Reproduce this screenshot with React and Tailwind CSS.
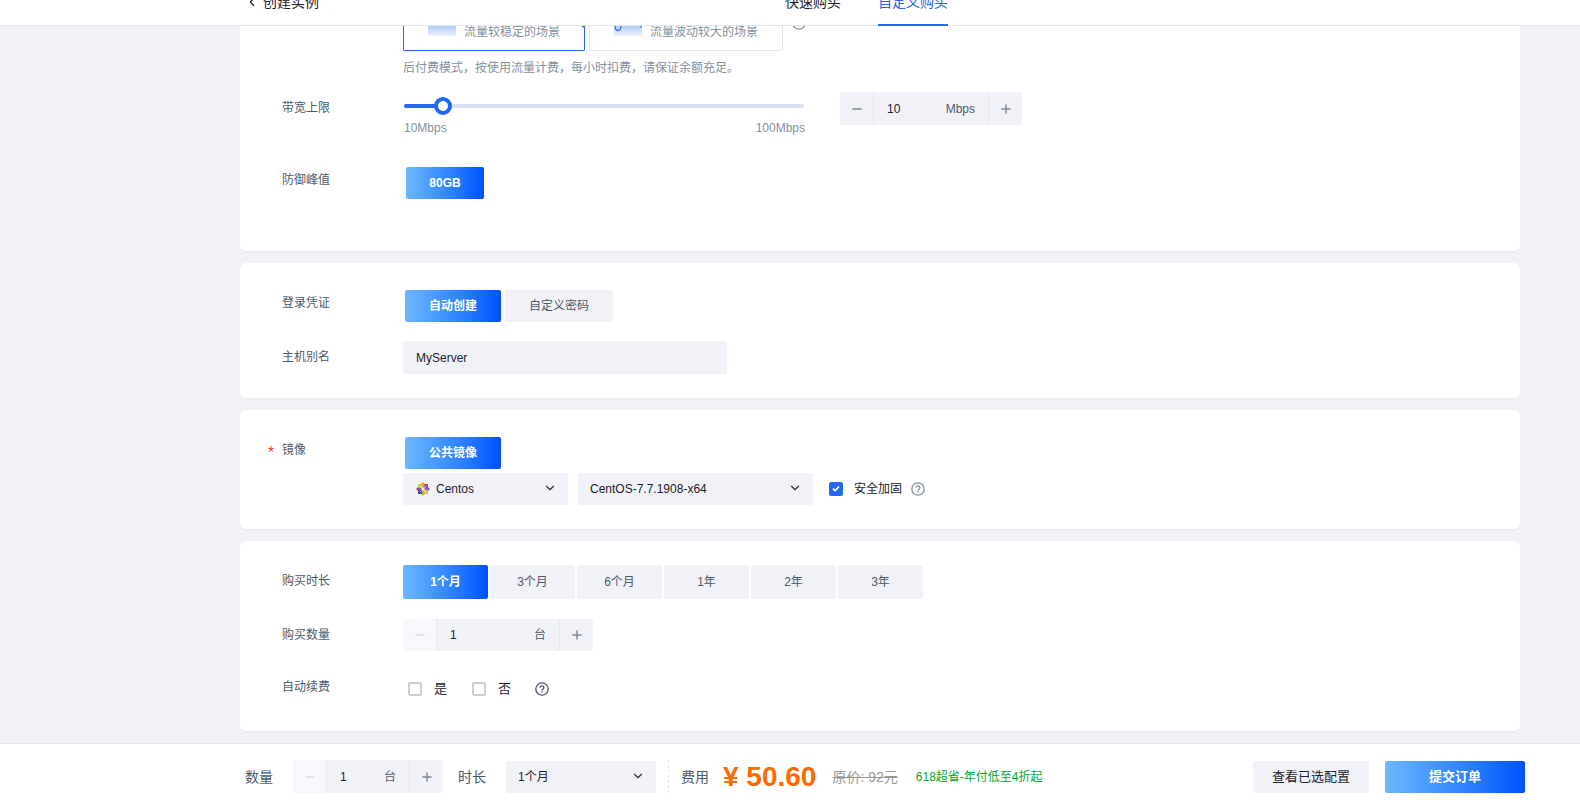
import { useState } from "react";
import { Check, ChevronDown, ChevronLeft, Minus, Plus } from "lucide-react";
import clsx from "clsx";

const durations = ["1个月", "3个月", "6个月", "1年", "2年", "3年"];

function HelpIcon({ className }) {
  return (
    <svg viewBox="0 0 14 14" className={clsx("h-3.5 w-3.5 shrink-0", className)} fill="none" stroke="currentColor" strokeWidth="1.3">
      <circle cx="7" cy="7" r="6.2" />
      <path d="M5.2 5.7a1.8 1.8 0 1 1 2.7 1.5c-.6.4-.9.6-.9 1.2" />
      <path d="M7 9.3v1.3" />
    </svg>
  );
}

function CentosLogo({ className }) {
  return (
    <svg viewBox="0 0 28 28" className={className}>
      <path d="M14 0l4 4-4 9-4-9z" fill="#efa724" />
      <path d="M28 14l-4 4-9-4 9-4z" fill="#6a69ae" />
      <path d="M14 28l-4-4 4-9 4 9z" fill="#9ccd2a" />
      <path d="M0 14l4-4 9 4-9 4z" fill="#a14a92" />
      <path d="M4 4h7l2 9-9-2z" fill="#a9d44a" />
      <path d="M24 4h-7l-2 9 9-2z" fill="#a03c8c" />
      <path d="M24 24h-7l-2-9 9 2z" fill="#f2b04a" />
      <path d="M4 24h7l2-9-9 2z" fill="#3b3a90" />
      <path d="M7 7l14 14M21 7L7 21" stroke="#f1f2f8" strokeWidth="1.6" />
    </svg>
  );
}

function Card({ className, children }) {
  return <section className={clsx("rounded-md bg-white pl-[42px] pr-6 shadow-[0_1px_2px_rgba(30,40,80,0.06)]", className)}>{children}</section>;
}

function Row({ label, labelClass, required, className, children }) {
  return (
    <div className={clsx("flex items-start", className)}>
      <div className={clsx("relative w-[121px] shrink-0 leading-5 text-[#4e5969]", labelClass)}>
        {required && <span className="absolute -left-3.5 top-1.5 text-base leading-5 text-[#f53f3f]">*</span>}
        {label}
      </div>
      {children}
    </div>
  );
}

function PrimaryButton({ className, children }) {
  return (
    <button className={clsx("h-8 rounded-xs bg-linear-to-r from-[#6bb8ff] to-[#0050ff] font-bold text-white", className)}>
      {children}
    </button>
  );
}

function Stepper({ label, value, onChange, min, unit, className }) {
  const atMin = value <= min;
  return (
    <div className={clsx("flex rounded-xs bg-[#f1f2f8] text-[#4e5969]", className)}>
      <button
        aria-label="-"
        disabled={atMin}
        onClick={() => onChange(value - 1)}
        className={clsx("flex w-[34px] shrink-0 items-center justify-center border-r border-[#e5e6eb]", atMin ? "bg-[#f7f8fc] text-[#d9dce3]" : "text-[#7d8696]")}
      >
        <Minus size={14} strokeWidth={2.5} />
      </button>
      <label className="flex min-w-0 flex-1 items-center px-[13px]">
        <input
          aria-label={label}
          value={value}
          onChange={(event) => onChange(Number(event.target.value) || min)}
          className="w-full min-w-0 bg-transparent text-[#1d2129] outline-none"
        />
        <span className="shrink-0">{unit}</span>
      </label>
      <button aria-label="+" onClick={() => onChange(value + 1)} className="flex w-[34px] shrink-0 items-center justify-center border-l border-[#e5e6eb] text-[#7d8696]">
        <Plus size={14} strokeWidth={2.5} />
      </button>
    </div>
  );
}

function Select({ label, options, icon, className }) {
  return (
    <div className={clsx("relative h-8", className)}>
      {icon}
      <select aria-label={label} className={clsx("h-full w-full appearance-none rounded-xs bg-[#f1f2f8] pr-8 text-[#1d2129] outline-none", icon ? "pl-[33px]" : "pl-3")}>
        {options.map((option) => (
          <option key={option}>{option}</option>
        ))}
      </select>
      <ChevronDown size={14} strokeWidth={2} className="pointer-events-none absolute right-[11px] top-2 text-[#272e3b]" />
    </div>
  );
}

function CheckBox({ label, checked, onChange, className }) {
  return (
    <label className={clsx("relative flex items-center text-[#1d2129]", className)}>
      <input
        type="checkbox"
        checked={checked}
        onChange={(event) => onChange(event.target.checked)}
        className="h-3.5 w-3.5 shrink-0 appearance-none rounded-xs border-2 border-[#c9cdd4] bg-white checked:border-[#2468f2] checked:bg-[#2468f2]"
      />
      {checked && <Check size={8} strokeWidth={5} className="pointer-events-none absolute left-[3px] text-white" />}
      {label}
    </label>
  );
}

export default function App() {
  const [bandwidth, setBandwidth] = useState(10);
  const [count, setCount] = useState(1);
  const [duration, setDuration] = useState("1个月");
  const [hardened, setHardened] = useState(true);
  const [renew, setRenew] = useState(null);

  return (
    <div className="flex min-h-screen flex-col bg-[#f0f2f7] font-['Liberation_Sans','Noto_Sans_CJK_SC',sans-serif] text-xs">
      <header className="sticky top-0 z-10 grid h-[26px] grid-cols-2 content-end items-end overflow-hidden bg-white text-sm leading-5 text-[#1d2129] shadow-[inset_0_-1px_0_#e5e6eb]">
        <a href="#" className="flex items-center gap-1 pb-3.5 pl-[245px]">
          <ChevronLeft size={14} />
          创建实例
        </a>
        <nav className="-ml-[5px] flex gap-[37px]">
          <a href="#" className="pb-3.5">快速购买</a>
          <a href="#" className="border-b-2 border-[#2468f2] pb-3 text-[#2468f2]">自定义购买</a>
        </nav>
      </header>

      <main className="flex flex-1 flex-col gap-3 pb-3 pl-60 pr-[60px]">
        <Card className="rounded-t-none pb-[52px]">
          <Row>
            <div>
              <div className="flex h-[25px] gap-1 overflow-hidden text-[#86909c]">
                <button className="relative flex w-[182px] items-start rounded-b-xs border border-t-0 border-[#2468f2] pl-6">
                  <span className="mr-2 h-2.5 w-7 bg-linear-to-b from-[#b3cbfb] to-[#eef3fe]" />
                  <span className="-mt-1 leading-5">流量较稳定的场景</span>
                  <svg viewBox="0 0 3 2" className="absolute right-0 top-0 h-0.5 w-[3px]">
                    <path d="M0 0h3v2z" fill="#2468f2" />
                  </svg>
                </button>
                <button className="relative flex w-[194px] items-start rounded-b-xs border border-t-0 border-[#e5e6eb] pl-6">
                  <svg viewBox="0 0 28 10" className="mr-2 h-2.5 w-7" fill="none">
                    <defs>
                      <linearGradient id="wave" x1="0" y1="0" x2="0" y2="1">
                        <stop offset="0" stopColor="#b3cbfb" />
                        <stop offset="1" stopColor="#eef3fe" />
                      </linearGradient>
                    </defs>
                    <path d="M0 0h28v10H0z" fill="url(#wave)" />
                    <path d="M1 0c0 3 1.5 4.4 3 4.4S7 3 7 0M27 0v1.5" stroke="#2468f2" strokeWidth="1.2" />
                  </svg>
                  <span className="-mt-1 leading-5">流量波动较大的场景</span>
                </button>
                <HelpIcon className="-mt-2.5 ml-[5px]" />
              </div>
              <p className="mt-[7px] leading-5 text-[#86909c]">后付费模式，按使用流量计费，每小时扣费，请保证余额充足。</p>
            </div>
          </Row>

          <Row label="带宽上限" labelClass="pt-1.5" className="mt-3.5">
            <div className="mt-[5px] w-[402px] text-[#86909c]">
              <div className="relative mx-px flex h-[18px] items-center">
                <div className="h-1 w-full rounded-full bg-[#dde1f1]">
                  <div className="h-full rounded-full bg-[#2468f2]" style={{ width: `${bandwidth}%` }} />
                </div>
                <input
                  type="range"
                  aria-label="带宽上限"
                  min="0"
                  max="100"
                  value={bandwidth}
                  onChange={(event) => setBandwidth(Math.max(10, Number(event.target.value)))}
                  className="absolute inset-y-0 -left-2.5 w-[418px] appearance-none bg-transparent [&::-webkit-slider-thumb]:h-[18px] [&::-webkit-slider-thumb]:w-[18px] [&::-webkit-slider-thumb]:appearance-none [&::-webkit-slider-thumb]:rounded-full [&::-webkit-slider-thumb]:border-4 [&::-webkit-slider-thumb]:border-[#2468f2] [&::-webkit-slider-thumb]:bg-white"
                />
              </div>
              <div className="mt-[3px] flex justify-between pl-px leading-5">
                <span>10Mbps</span>
                <span>100Mbps</span>
              </div>
            </div>
            <Stepper label="带宽上限" value={bandwidth} onChange={setBandwidth} min={1} unit="Mbps" className="ml-[35px] h-[33px] w-[182px]" />
          </Row>

          <Row label="防御峰值" labelClass="pt-[3px]" className="mt-[29px]">
            <PrimaryButton className="ml-[3px] w-[78px]">80GB</PrimaryButton>
          </Row>
        </Card>

        <Card className="pb-6 pt-[27px]">
          <Row label="登录凭证" labelClass="pt-[3px]">
            <div className="flex gap-1 pl-0.5">
              <PrimaryButton className="w-24">自动创建</PrimaryButton>
              <button className="h-8 w-[108px] rounded-xs bg-[#f1f2f8] text-[#4e5969]">自定义密码</button>
            </div>
          </Row>
          <Row label={<label htmlFor="alias">主机别名</label>} labelClass="pt-1.5" className="mt-[19px]">
            <input id="alias" defaultValue="MyServer" className="h-[33px] w-[324px] rounded-xs bg-[#f1f2f8] px-[13px] text-[#1d2129] outline-none" />
          </Row>
        </Card>

        <Card className="pb-6 pt-[27px]">
          <Row label="镜像" labelClass="pt-[3px]" required>
            <div>
              <PrimaryButton className="ml-0.5 w-24">公共镜像</PrimaryButton>
              <div className="mt-1 flex items-center">
                <Select
                  label="镜像"
                  options={["Centos"]}
                  icon={<CentosLogo className="pointer-events-none absolute left-[13px] top-[9px] h-3.5 w-3.5" />}
                  className="w-[165px]"
                />
                <Select label="CentOS" options={["CentOS-7.7.1908-x64"]} className="ml-2.5 w-[235px]" />
                <CheckBox label={<span className="ml-[11px]">安全加固</span>} checked={hardened} onChange={setHardened} className="ml-4" />
                <HelpIcon className="ml-[9px] text-[#86909c]" />
              </div>
            </div>
          </Row>
        </Card>

        <Card className="pb-7 pt-6">
          <Row label="购买时长" labelClass="pt-1.5">
            <div className="flex gap-0.5">
              {durations.map((item) => (
                <button
                  key={item}
                  onClick={() => setDuration(item)}
                  className={clsx(
                    "h-[34px] w-[85px] rounded-xs",
                    item === duration ? "bg-linear-to-r from-[#6bb8ff] to-[#0050ff] font-bold text-white" : "bg-[#f1f2f8] text-[#4e5969]"
                  )}
                >
                  {item}
                </button>
              ))}
            </div>
          </Row>
          <Row label="购买数量" labelClass="pt-1.5" className="mt-5">
            <Stepper label="购买数量" value={count} onChange={setCount} min={1} unit="台" className="h-8 w-[190px]" />
          </Row>
          <Row label="自动续费" labelClass="pt-0.5" className="mt-6">
            <div className="flex h-7 items-center pl-[5px] text-[13px]">
              <CheckBox label={<span className="ml-3">是</span>} checked={renew === true} onChange={(on) => setRenew(on ? true : null)} />
              <CheckBox label={<span className="ml-3">否</span>} checked={renew === false} onChange={(on) => setRenew(on ? false : null)} className="ml-[25px]" />
              <HelpIcon className="ml-6 text-[#4e5969]" />
            </div>
          </Row>
        </Card>
      </main>

      <footer className="sticky bottom-0 z-10 flex h-16 items-center border-t border-[#e5e6eb] bg-white pl-[245px] pr-[55px] pt-0.5 text-[#4e5969]">
        <span className="text-sm">数量</span>
        <Stepper label="数量" value={count} onChange={setCount} min={1} unit="台" className="ml-5 h-[33px] w-[150px]" />
        <span className="ml-[15px] text-sm">时长</span>
        <Select label="时长" options={durations} className="ml-5 w-[150px]" />
        <span className="ml-3 h-[33px] border-l border-dashed border-[#e5e6eb]" />
        <span className="ml-3 text-sm">费用</span>
        <span className="ml-3.5 text-[28px] font-bold leading-8 text-[#ff6a00]">¥ 50.60</span>
        <span className="ml-4 text-sm text-[#999] line-through">原价: 92元</span>
        <span className="ml-[18px] text-[#00a82d]">618超省-年付低至4折起</span>
        <button className="ml-auto h-8 w-[116px] rounded-xs bg-[#f1f2f8] text-[13px] text-[#1d2129]">查看已选配置</button>
        <PrimaryButton className="ml-4 w-[140px] text-[13px]">提交订单</PrimaryButton>
      </footer>
    </div>
  );
}
